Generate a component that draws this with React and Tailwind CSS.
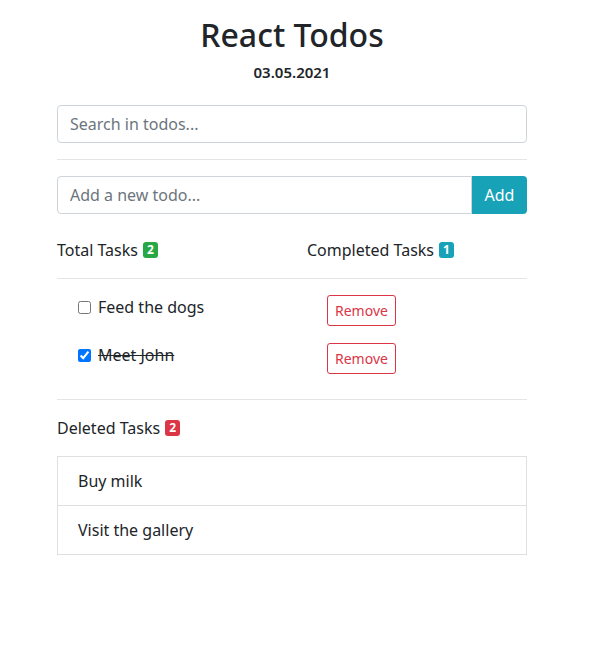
import React, { useState } from 'react';

const font = { fontFamily: '"Segoe UI", "Noto Sans", "Liberation Sans", sans-serif' };

export default function App() {
  const [todos, setTodos] = useState([
    { id: 1, text: 'Feed the dogs', done: false },
    { id: 2, text: 'Meet John', done: true },
  ]);
  const deleted = ['Buy milk', 'Visit the gallery'];

  const toggle = (id) =>
    setTodos((prev) => prev.map((t) => (t.id === id ? { ...t, done: !t.done } : t)));

  return (
    <div className="min-h-screen bg-white text-[#212529]" style={font}>
      <div className="w-[470px] ml-[57px] pt-[16px]">
        {/* Header */}
        <h1 className="text-center text-[32px] font-medium leading-[1.2] mb-[8px]">React Todos</h1>
        <p className="text-center text-[15px] font-semibold leading-[21px] mb-[22px]">03.05.2021</p>

        {/* Search */}
        <input
          className="w-full h-[38px] px-[12px] text-[16px] border border-[#ced4da] rounded-[4px] placeholder:text-[#6c757d] outline-none"
          placeholder="Search in todos..."
        />
        <hr className="my-[16px] border-t border-black/10" />

        {/* Add */}
        <div className="flex h-[38px]">
          <input
            className="flex-1 px-[12px] text-[16px] border border-[#ced4da] rounded-l-[4px] placeholder:text-[#6c757d] outline-none"
            placeholder="Add a new todo..."
          />
          <button className="w-[55px] bg-[#17a2b8] text-white text-[16px] rounded-r-[4px]">Add</button>
        </div>

        {/* Counters */}
        <div className="grid grid-cols-2 mt-[24px] text-[16px] leading-[24px]">
          <div className="flex items-center gap-[5px]">
            Total Tasks
            <span className="inline-flex items-center justify-center min-w-[15px] h-[16px] px-[4px] rounded-[3px] bg-[#28a745] text-white text-[12px] font-bold">{todos.length}</span>
          </div>
          <div className="flex items-center gap-[5px] pl-[15px]">
            Completed Tasks
            <span className="inline-flex items-center justify-center min-w-[15px] h-[16px] px-[4px] rounded-[3px] bg-[#17a2b8] text-white text-[12px] font-bold">{todos.filter((t) => t.done).length}</span>
          </div>
        </div>
        <hr className="mt-[16px] mb-[16px] border-t border-black/10" />

        {/* Todo list */}
        <div className="flex flex-col">
          {todos.map((t) => (
            <div key={t.id} className="grid grid-cols-2 h-[48px] text-[16px] leading-[24px]">
              <label className="flex items-start gap-[7px] pl-[21px]">
                <input type="checkbox" checked={t.done} onChange={() => toggle(t.id)} className="w-[13px] h-[13px] mt-[6px]" />
                <span className={t.done ? 'line-through' : ''}>{t.text}</span>
              </label>
              <div className="pl-[35px]">
                <button className="h-[31px] px-[7px] border border-[#dc3545] text-[#dc3545] text-[14px] rounded-[3px]">Remove</button>
              </div>
            </div>
          ))}
        </div>
        <hr className="mt-[8px] mb-[16px] border-t border-black/10" />

        {/* Deleted */}
        <div className="flex items-center gap-[5px] text-[16px] leading-[24px] mb-[16px]">
          Deleted Tasks
          <span className="inline-flex items-center justify-center min-w-[15px] h-[16px] px-[4px] rounded-[3px] bg-[#dc3545] text-white text-[12px] font-bold">{deleted.length}</span>
        </div>
        <ul className="border border-black/[0.125]">
          {deleted.map((d, i) => (
            <li key={d} className={`px-[20px] py-[12px] text-[16px] leading-[24px] ${i > 0 ? 'border-t border-black/[0.125]' : ''}`}>
              {d}
            </li>
          ))}
        </ul>
      </div>
    </div>
  );
}
